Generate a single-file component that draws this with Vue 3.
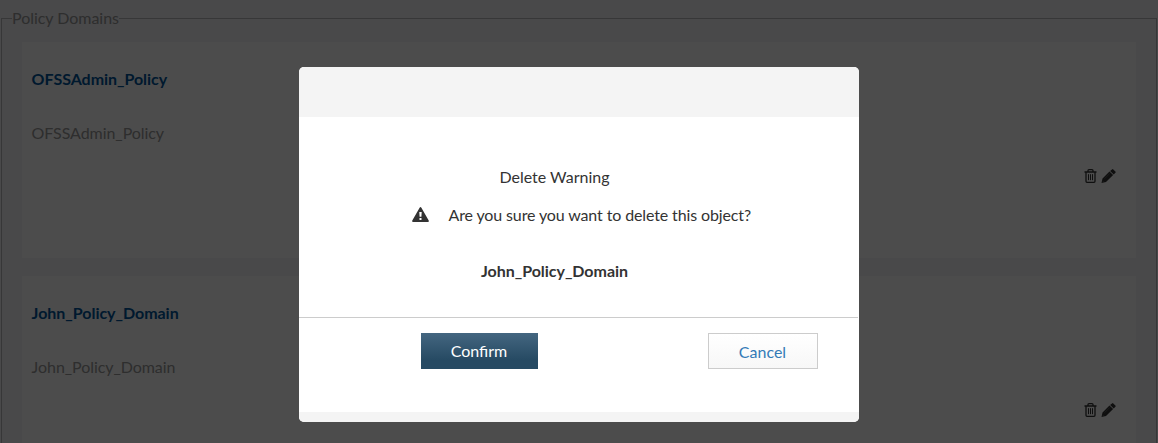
<script setup>
const domains = ['OFSSAdmin_Policy', 'John_Policy_Domain']
</script>

<template>
  <div class="page">
    <fieldset class="domains">
      <legend>Policy Domains</legend>
      <article v-for="name in domains" :key="name" class="card">
        <h3>{{ name }}</h3>
        <p>{{ name }}</p>
        <div class="actions">
          <svg class="trash" width="13" height="14" viewBox="0 0 13 14">
            <path d="M.5 3h12M4 2.8V1.6Q4 .7 5 .7h3q1 0 1 .9v1.2M2 3v9.2q0 1.1 1 1.1h7q1 0 1-1.1V3" fill="none" stroke="currentColor" stroke-width="1.3" />
            <path d="M4.5 5.2v6M6.5 5.2v6M8.5 5.2v6" stroke="currentColor" stroke-width="1" />
          </svg>
          <svg width="15" height="14" viewBox="0 0 15 14">
            <path d="M9.1 2.1 11 .4q.6-.6 1.3 0l2.1 2.1q.6.6 0 1.3l-1.7 1.7zM8.5 2.6 12.1 6.1 5 13.1.5 14l1-4.5z" fill="currentColor" />
            <path d="M3.4 9.8 8.6 4.7M1.5 11.8l1.2 1.2" fill="none" stroke="#777" stroke-width=".6" />
          </svg>
        </div>
      </article>
    </fieldset>

    <div class="overlay">
      <section class="dialog" role="dialog">
        <header></header>
        <div class="message">
          <div class="title">Delete Warning</div>
          <div class="question">
            <svg width="17" height="15" viewBox="0 0 17 15">
              <path fill-rule="evenodd" d="M7.6.7q.9-1.4 1.8 0l7.3 12.9q.6 1.3-.8 1.4H1.1q-1.4-.1-.8-1.4zM7.3 5l.3 4.8h1.8L9.7 5zM7.5 11v2h2v-2z" fill="currentColor" />
            </svg>
            <span>Are you sure you want to delete this object?</span>
          </div>
          <div class="object">John_Policy_Domain</div>
        </div>
        <div class="buttons">
          <button class="confirm">Confirm</button>
          <button class="cancel">Cancel</button>
        </div>
        <footer></footer>
      </section>
    </div>
  </div>
</template>

<style>
body { margin: 0; overflow: hidden; }
</style>

<style scoped>
.page {
  position: relative;
  height: 443px;
  overflow: hidden;
  box-sizing: border-box;
  padding: 7px 1px 0;
  background: #f3f3f7;
  color: #999;
  font: 16px/22px Lato, sans-serif;
}
.domains {
  box-sizing: border-box;
  height: 520px;
  min-width: 0;
  margin: 0;
  padding: 13px 20px 0;
  border: 1px solid #b8b8bc;
}
legend { padding: 0; margin-left: -10px; height: 22px; letter-spacing: -.03px; }
.card {
  display: flex;
  flex-direction: column;
  box-sizing: border-box;
  height: 216px;
  margin-bottom: 18px;
  padding: 26px 20px 0 10px;
  background: #fff;
}
h3 { margin: 0 0 0 -.4px; font-size: 16px; line-height: 22px; letter-spacing: -.03px; color: #00569c; }
p { margin: 32px 0 0 -.4px; letter-spacing: -.06px; }
.actions {
  display: flex;
  justify-content: flex-end;
  gap: 4px;
  margin-top: 25px;
  color: #333;
}
.overlay {
  position: absolute;
  inset: 0;
  display: flex;
  justify-content: center;
  align-items: flex-start;
  padding-top: 67px;
  background: rgba(0, 0, 0, .7);
}
.dialog {
  display: flex;
  flex-direction: column;
  width: 560px;
  height: 355px;
  overflow: hidden;
  border-radius: 5px;
  background: #fff;
  color: #333;
}
header { height: 50px; background: #f4f4f4; }
.message { box-sizing: border-box; height: 200px; padding-top: 49px; }
.title, .object { width: 511px; text-align: center; }
.question { display: flex; align-items: center; gap: 19.5px; margin: 16px 0 34px 113px; letter-spacing: -.125px; }
.question svg { margin-top: -1px; }
.object { font-weight: 700; letter-spacing: -.03px; }
.buttons {
  display: flex;
  justify-content: space-between;
  box-sizing: border-box;
  height: 95px;
  margin-right: 1px;
  padding: 15px 40px 0 122px;
  border-top: 1px solid #ccc;
}
button { box-sizing: border-box; height: 36px; padding: 0; font: 16px/20px Lato, sans-serif; }
.confirm { width: 117px; padding-right: 1px; border: 0; color: #fff; background: linear-gradient(#446680, #264a63 75%); }
.cancel { width: 110px; padding: 2px 1px 0 0; border: 1px solid #ccc; color: #337ab7; background: linear-gradient(#fff, #f7f7f7); }
footer { height: 10px; background: #f4f4f4; }
</style>
